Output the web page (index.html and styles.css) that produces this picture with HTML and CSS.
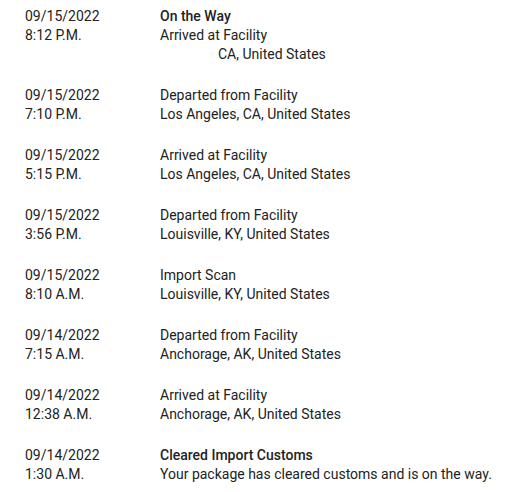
FILE: index.html
```html
<!DOCTYPE html>
<html>
<head>
<meta charset="utf-8">
<link rel="stylesheet" href="styles.css">
</head>
<body>
<div class="list">
  <div class="row">
    <div class="when"><div>09/15/2022</div><div>8:12 P.M.</div></div>
    <div class="what"><div class="strong">On the Way</div><div>Arrived at Facility</div><div class="indent">CA, United States</div></div>
  </div>
  <div class="row">
    <div class="when"><div>09/15/2022</div><div>7:10 P.M.</div></div>
    <div class="what"><div>Departed from Facility</div><div>Los Angeles, CA, United States</div></div>
  </div>
  <div class="row">
    <div class="when"><div>09/15/2022</div><div>5:15 P.M.</div></div>
    <div class="what"><div>Arrived at Facility</div><div>Los Angeles, CA, United States</div></div>
  </div>
  <div class="row">
    <div class="when"><div>09/15/2022</div><div>3:56 P.M.</div></div>
    <div class="what"><div>Departed from Facility</div><div>Louisville, KY, United States</div></div>
  </div>
  <div class="row">
    <div class="when"><div>09/15/2022</div><div>8:10 A.M.</div></div>
    <div class="what"><div>Import Scan</div><div>Louisville, KY, United States</div></div>
  </div>
  <div class="row">
    <div class="when"><div>09/14/2022</div><div>7:15 A.M.</div></div>
    <div class="what"><div>Departed from Facility</div><div>Anchorage, AK, United States</div></div>
  </div>
  <div class="row">
    <div class="when"><div>09/14/2022</div><div>12:38 A.M.</div></div>
    <div class="what"><div>Arrived at Facility</div><div>Anchorage, AK, United States</div></div>
  </div>
  <div class="row">
    <div class="when"><div>09/14/2022</div><div>1:30 A.M.</div></div>
    <div class="what"><div class="strong">Cleared Import Customs</div><div>Your package has cleared customs and is on the way.</div></div>
  </div>
</div>
</body>
</html>
```
FILE: styles.css
```css
html, body {
  margin: 0;
  padding: 0;
  background: #fff;
}
body {
  font-family: Roboto, "Liberation Sans", sans-serif;
  font-size: 14px;
  line-height: 19px;
  color: #222;
}
.list {
  display: flex;
  flex-direction: column;
  gap: 22px;
  padding: 7px 0 0 25px;
}
.row {
  display: flex;
}
.when {
  width: 135px;
  flex-shrink: 0;
}
.strong {
  font-weight: 500;
}
.indent {
  padding-left: 58px;
}
```
